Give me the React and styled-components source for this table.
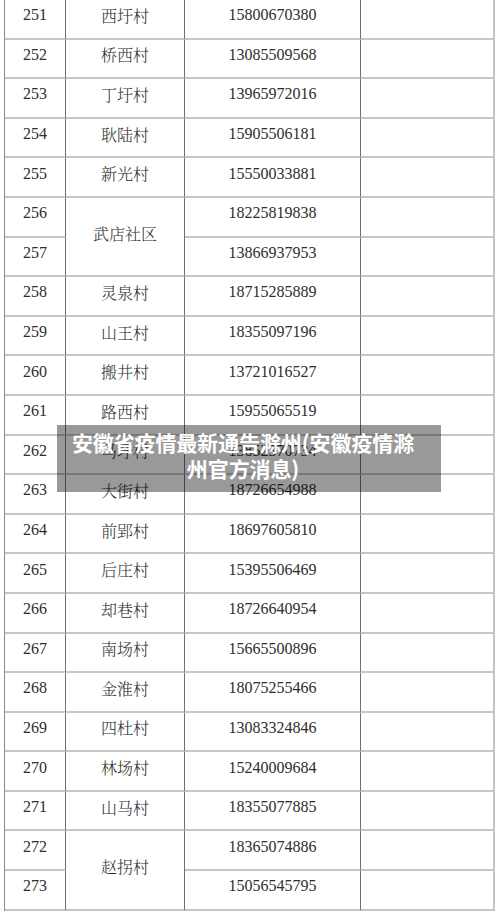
import React from "react";
import styled, { createGlobalStyle } from "styled-components";

const Global = createGlobalStyle`
  html, body { margin: 0; padding: 0; background: #fff; }
  body { font-family: "Liberation Serif", "Noto Serif CJK SC", "Noto Sans CJK SC", serif; }
`;

const Page = styled.div`
  position: relative;
  width: 500px;
  height: 917px;
  overflow: hidden;
  background: #fff;
`;

const Table = styled.div`
  display: grid;
  grid-template-columns: 61px 119px 176px 134px;
  grid-auto-rows: 39.6px;
  margin-left: 4px;
  border-left: 1px solid #8c8c8c;
  width: 491px;
`;

const Cell = styled.div`
  box-sizing: border-box;
  display: flex;
  align-items: center;
  justify-content: center;
  padding-bottom: 7px;
  border-bottom: 2px solid #c6c6c6;
  border-right: ${(p) => (p.$last ? "2px solid #c4c4c4" : "1px solid #707070")};
  grid-row: ${(p) => (p.$span ? `span ${p.$span}` : "auto")};
  font-size: 16px;
  color: #2e2e2e;
  font-family: ${(p) =>
    p.$cjk
      ? '"Noto Serif CJK SC", "Noto Sans CJK SC", serif'
      : '"Liberation Serif", serif'};
  font-weight: ${(p) => (p.$cjk ? 300 : 400)};
`;

const Caption = styled.div`
  position: absolute;
  left: 57px;
  top: 425px;
  width: 384px;
  height: 67px;
  box-sizing: border-box;
  padding: 4px 12px 0 0;
  background: rgba(0, 0, 0, 0.4);
  color: #fff;
  font-family: "Noto Sans CJK SC", sans-serif;
  font-weight: 700;
  font-size: 21px;
  line-height: 26px;
  text-align: center;
  white-space: nowrap;
  letter-spacing: -0.1px;
`;

const rows = [
  { n: "251", name: "西圩村", tel: "15800670380" },
  { n: "252", name: "桥西村", tel: "13085509568" },
  { n: "253", name: "丁圩村", tel: "13965972016" },
  { n: "254", name: "耿陆村", tel: "15905506181" },
  { n: "255", name: "新光村", tel: "15550033881" },
  { n: "256", name: "武店社区", span: 2, tel: "18225819838" },
  { n: "257", tel: "13866937953" },
  { n: "258", name: "灵泉村", tel: "18715285889" },
  { n: "259", name: "山王村", tel: "18355097196" },
  { n: "260", name: "搬井村", tel: "13721016527" },
  { n: "261", name: "路西村", tel: "15955065519" },
  { n: "262", name: "马圩村", tel: "13852370734" },
  { n: "263", name: "大街村", tel: "18726654988" },
  { n: "264", name: "前郢村", tel: "18697605810" },
  { n: "265", name: "后庄村", tel: "15395506469" },
  { n: "266", name: "却巷村", tel: "18726640954" },
  { n: "267", name: "南场村", tel: "15665500896" },
  { n: "268", name: "金淮村", tel: "18075255466" },
  { n: "269", name: "四杜村", tel: "13083324846" },
  { n: "270", name: "林场村", tel: "15240009684" },
  { n: "271", name: "山马村", tel: "18355077885" },
  { n: "272", name: "赵拐村", span: 2, tel: "18365074886" },
  { n: "273", tel: "15056545795" },
];

export default function App() {
  return (
    <Page>
      <Global />
      <Table>
        {rows.map((r) => (
          <React.Fragment key={r.n}>
            <Cell>{r.n}</Cell>
            {r.name !== undefined && (
              <Cell $cjk $span={r.span}>
                {r.name}
              </Cell>
            )}
            <Cell>{r.tel}</Cell>
            <Cell $last />
          </React.Fragment>
        ))}
      </Table>
      <Caption>
        安徽省疫情最新通告滁州(安徽疫情滁
        <br />
        州官方消息)
      </Caption>
    </Page>
  );
}
